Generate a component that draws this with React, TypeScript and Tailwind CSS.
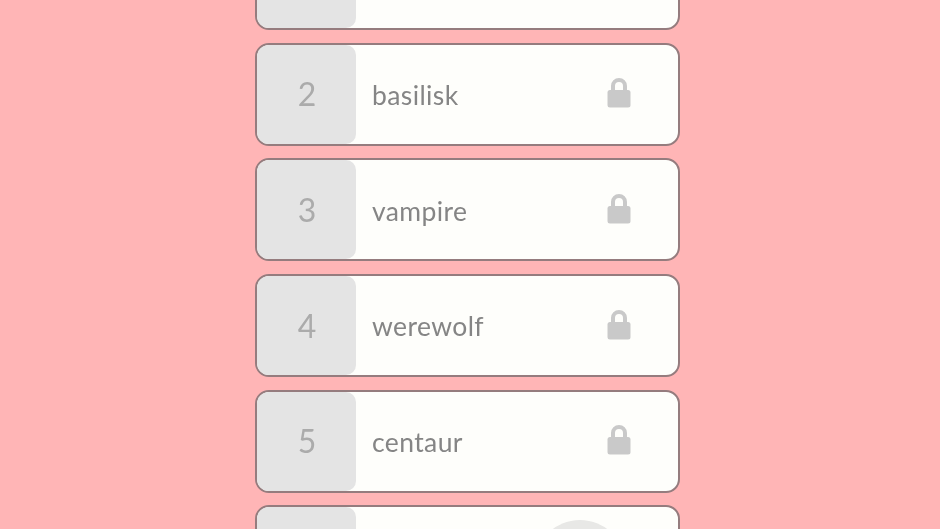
import React from "react";

const rows = [
  { n: "", name: "", lock: false },
  { n: "2", name: "basilisk", lock: true },
  { n: "3", name: "vampire", lock: true },
  { n: "4", name: "werewolf", lock: true },
  { n: "5", name: "centaur", lock: true },
  { n: "", name: "", lock: false, circle: true },
];

function Lock() {
  return (
    <svg width="24" height="31" viewBox="0 0 24 31" aria-hidden="true">
      <path d="M6 15V9a6 6 0 0 1 12 0v6" fill="none" stroke="#c9c9c9" strokeWidth="4" />
      <rect x="0.5" y="13" width="23" height="17.5" rx="2.5" fill="#c9c9c9" />
    </svg>
  );
}

export default function App() {
  return (
    <div className="w-[940px] h-[529px] overflow-hidden bg-[#ffb5b6] font-['Lato',sans-serif]">
      <div className="ml-[255px] w-[425px] mt-[-73px] flex flex-col gap-[12.7px] blur-[0.6px]">
        {rows.map((r, i) => (
          <div
            key={i}
            className="relative h-[103px] flex items-stretch bg-[#fefefb] rounded-[14px] border-2 border-[#957c7e] overflow-hidden"
          >
            <div className="w-[99px] shrink-0 flex items-center justify-center pl-[1px] bg-[#e4e4e4] rounded-r-[10px] text-[32px] text-[#ababab]">
              {r.n}
            </div>
            <div className="flex-1 flex items-center pl-[16px] pt-[3px] text-[26.5px] tracking-[0.4px] text-[#858585]">
              {r.name}
            </div>
            {r.lock && (
              <div className="w-[24px] mr-[47px] pb-[3px] flex items-center justify-center">
                <Lock />
              </div>
            )}
            {r.circle && (
              <div className="absolute left-[277px] top-[13px] w-[92px] h-[92px] rounded-full bg-[#e8e8e6]" />
            )}
          </div>
        ))}
      </div>
    </div>
  );
}
